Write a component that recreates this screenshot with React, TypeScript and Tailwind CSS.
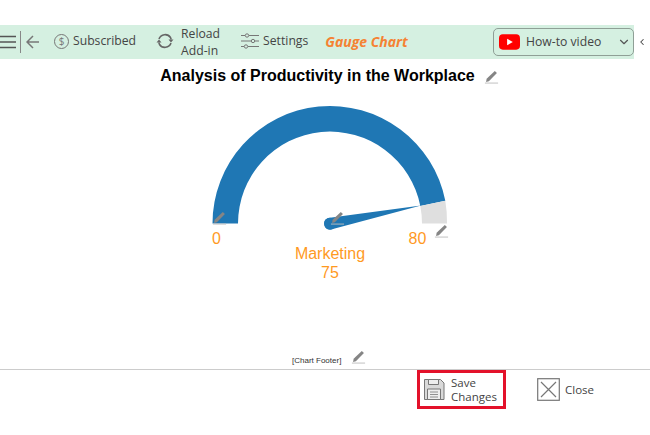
import { ChevronDown, ChevronLeft } from "lucide-react";

const Pencil = ({ className = "" }: { className?: string }) => (
  <svg viewBox="0 0 16 16" className={className} fill="none">
    <path d="M2.800 10.500 11.500 2l2.300 2.300L5.200 13l-3 .8z" fill="#858585" />
    <path d="M1 15h14" stroke="#bdbdbd" strokeWidth="1" />
  </svg>
);

export default function App() {
  return (
    <div className="w-[650px] h-[435px] bg-white overflow-hidden flex flex-col pt-[25px] font-['Open_Sans',sans-serif] text-[#444]">
      {/* toolbar */}
      <div className="flex items-center h-[34px]">
        <div className="w-[634px] h-full bg-[#d5f0e1] flex items-center text-[12.2px] pb-[2px]">
          <svg viewBox="0 0 17 16" className="w-[17px] h-[16px] shrink-0 mt-[2px]" stroke="#555" strokeWidth="1.7">
            <path d="M0 2.500h16M0 8h16M0 13.500h16" />
          </svg>
          <div className="w-px h-[22px] bg-[#888] ml-[3px] mt-[2px]" />
          <svg viewBox="0 0 14 14" className="w-[14px] h-[14px] ml-[5px] mt-[2px]" fill="none" stroke="#777" strokeWidth="1.5">
            <path d="M13 7H1.500M7 1 1 7l6 6" />
          </svg>
          <span className="ml-[14px] w-[15px] h-[15px] rounded-full border border-[#777] text-[#777] text-[10px] flex items-center justify-center mt-[1px]">$</span>
          <span className="ml-[4px]">Subscribed</span>
          <svg viewBox="0 0 18 18" className="ml-[20px] w-[18px] h-[18px]" fill="none" stroke="#666" strokeWidth="1.600">
            <path d="M3 7a6.500 6.500 0 0 1 11.500-1.500l.7 2M15 11a6.500 6.500 0 0 1-11.500 1.500l-.7-2" />
            <path d="M12.500 7.500h5l-2.500 3zM.5 10.500h5l-2.500-3z" fill="#666" stroke="none" />
          </svg>
          <div className="ml-[7px] leading-[17px] mt-[1px]">Reload<br />Add-in</div>
          <svg viewBox="0 0 18 16" className="ml-[21px] w-[18px] h-[16px]" fill="none" stroke="#777" strokeWidth="1">
            <path d="M0 2.500h4M8 2.500h10M0 8h10M14 8h4M0 13.500h3M7 13.500h11" />
            <circle cx="6" cy="2.500" r="1.700" />
            <circle cx="12" cy="8" r="1.700" />
            <circle cx="5" cy="13.500" r="1.700" />
          </svg>
          <span className="ml-[4px]">Settings</span>
          <span className="ml-[17px] font-bold italic text-[14px] text-[#f58233]">Gauge Chart</span>
          <div className="ml-auto w-[141px] h-[28px] rounded-[5px] border border-[#8f9f96] flex items-center pl-[5px] pr-[2px] mt-[2px]">
            <svg viewBox="0 0 22 16" className="w-[21px] h-[16px]">
              <rect width="22" height="16" rx="4" fill="#f00" />
              <path d="M8.500 4.500v7l6-3.500z" fill="#fff" />
            </svg>
            <span className="ml-[6px]">How-to video</span>
            <ChevronDown className="ml-auto w-[14px] h-[14px] text-[#555]" />
          </div>
        </div>
        <ChevronLeft className="ml-[3px] w-[10px] h-[10px] text-[#444]" strokeWidth={2.5} />
      </div>

      {/* title */}
      <div className="h-[34px] flex items-center justify-center pl-[9px] gap-[9px] font-['Liberation_Sans',sans-serif] font-bold text-[16px] text-black">
        <span>Analysis of Productivity in the Workplace</span>
        <Pencil className="w-[15px] h-[15px]" />
      </div>

      {/* chart */}
      <div className="relative h-[276px] w-full shrink-0">
        <svg width="650" height="276" viewBox="0 93 650 276" className="block">
          <path d="M212.500 223.500A117.500 117.500 0 0 1 445.300 200.800L420.300 206A92 92 0 0 0 238 223.500Z" fill="#1f77b4" />
          <path d="M445.300 200.800A117.500 117.500 0 0 1 447 223.500H422A92 92 0 0 0 420.300 206Z" fill="#dfdfdf" />
          <path d="M421 205.500 331 229.500A6 6 0 0 1 328 218Z" fill="#1f77b4" />
          <circle cx="330" cy="223.700" r="6" fill="#1f77b4" />
          <g fontFamily="'Liberation Sans', sans-serif" fill="#ff9a1f" textAnchor="middle" fontSize="16">
            <text x="216.500" y="244">0</text>
            <text x="417.500" y="244">80</text>
            <text x="330" y="259">Marketing</text>
            <text x="330" y="278">75</text>
          </g>
        </svg>
        <Pencil className="absolute left-[212px] top-[117px] w-[15px] h-[15px]" />
        <Pencil className="absolute left-[330px] top-[117px] w-[15px] h-[15px]" />
        <Pencil className="absolute left-[434px] top-[130px] w-[15px] h-[15px]" />
        <div className="absolute left-[292px] top-[262px] text-[8px] font-['Liberation_Sans',sans-serif] text-[#333]">[Chart Footer]</div>
        <Pencil className="absolute left-[351px] top-[256px] w-[15px] h-[15px]" />
      </div>

      <div className="h-px bg-[#ccc] shrink-0" />

      {/* actions */}
      <div className="flex items-center pl-[417px] text-[11.500px] text-[#444]">
        <div className="w-[89px] h-[39px] border-[3px] border-[#e3112a] flex items-center pl-[3px] gap-[6px] leading-[14px]">
          <svg viewBox="0 0 22 23" className="w-[22px] h-[23px] shrink-0" fill="#d9d9d9" stroke="#777" strokeWidth="1">
            <path d="M1.500 1.500h16l3.500 3.500v16.500h-19.500z" />
            <path d="M5.500 1.500h10v5h-10z" fill="#eee" />
            <path d="M4.500 11h13v10.500h-13z" fill="#eee" />
            <path d="M7 14h8M7 16.500h8M7 19h8" strokeWidth="0.800" />
          </svg>
          <div>Save<br />Changes</div>
        </div>
        <svg viewBox="0 0 23 23" className="ml-[31px] w-[23px] h-[23px]" fill="none" stroke="#777" strokeWidth="1.200">
          <rect x="0.700" y="0.700" width="21.600" height="21.600" />
          <path d="M4 4l15 15M19 4 4 19" />
        </svg>
        <span className="ml-[5px]">Close</span>
      </div>
    </div>
  );
}
